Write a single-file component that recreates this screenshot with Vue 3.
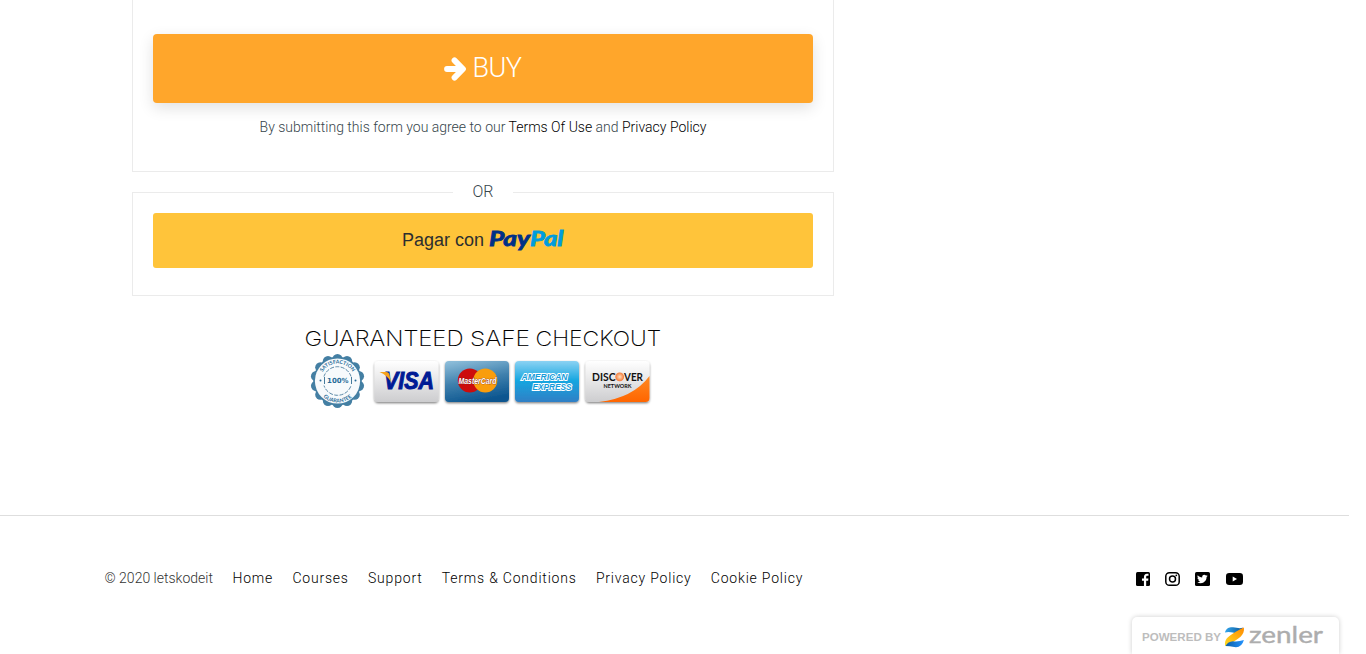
<script setup>
const links = ['Home', 'Courses', 'Support', 'Terms & Conditions', 'Privacy Policy', 'Cookie Policy']
const scallops = Array.from({ length: 14 }, (_, i) => {
  const a = ((i + 0.5) * Math.PI) / 7
  return { x: 37.5 + 21.9 * Math.cos(a), y: 61 + 21.9 * Math.sin(a) }
})
</script>

<template>
  <div class="page">
    <main class="checkout">
      <section class="card form-card">
        <button class="buy">
          <svg width="23" height="24" viewBox="0 0 23 24" fill="none" stroke="#fff" stroke-width="5.8" stroke-linecap="round" stroke-linejoin="round">
            <path d="M3 12H17" /><path d="M10.5 3.4L19 12L10.5 20.6" />
          </svg>
          <span>BUY</span>
        </button>
        <p class="agree">By submitting this form you agree to our <a>Terms Of Use</a> and <a>Privacy Policy</a></p>
      </section>

      <section class="card pay-card">
        <div class="or">OR</div>
        <button class="paypal">
          <span>Pagar con</span>
          <svg width="77" height="34" viewBox="0 -5 77 34" class="paypal-logo">
            <text x="1" y="17" textLength="41" lengthAdjust="spacingAndGlyphs" fill="#003087" stroke="#003087">Pay</text>
            <text x="42" y="17" textLength="33.5" lengthAdjust="spacingAndGlyphs" fill="#009cde" stroke="#009cde">Pal</text>
          </svg>
        </button>
      </section>

      <svg class="safe" width="366" height="100" viewBox="0 0 366 100">
        <defs>
          <linearGradient id="silver" x2="0" y2="1"><stop stop-color="#fff" /><stop offset="1" stop-color="#cdcdcf" /></linearGradient>
          <linearGradient id="navy" x1=".2" x2=".5" y2="1"><stop stop-color="#8abbd8" /><stop offset=".5" stop-color="#3f80ad" /><stop offset="1" stop-color="#0b558f" /></linearGradient>
          <linearGradient id="sky" x2="0" y2="1"><stop stop-color="#8bd2f3" /><stop offset=".48" stop-color="#16a6e0" /><stop offset="1" stop-color="#307fc5" /></linearGradient>
          <linearGradient id="flame" x2="0" y2="1"><stop stop-color="#ff8a22" /><stop offset="1" stop-color="#ff6500" /></linearGradient>
          <radialGradient id="orb"><stop stop-color="#ffdfc0" /><stop offset="1" stop-color="#f47835" /></radialGradient>
          <filter id="drop" x="-10%" y="-10%" width="120%" height="130%"><feDropShadow dx="0" dy="1.2" stdDeviation="1" flood-opacity=".5" /></filter>
          <path id="arcTop" d="M20 61A17.5 17.5 0 0 1 55 61" />
          <path id="arcBottom" d="M16 61A21.5 21.5 0 0 0 59 61" />
        </defs>
        <g class="headline">
          <text x="4.5" y="26" textLength="159" lengthAdjust="spacingAndGlyphs">GUARANTEED</text>
          <text x="170" y="26" textLength="60" lengthAdjust="spacingAndGlyphs">SAFE</text>
          <text x="235.5" y="26" textLength="125.5" lengthAdjust="spacingAndGlyphs">CHECKOUT</text>
        </g>

        <g>
          <circle v-for="(s, i) in scallops" :key="i" :cx="s.x" :cy="s.y" r="5.2" fill="#447fa3" />
          <circle cx="37.5" cy="61" r="24.3" fill="#447fa3" />
          <circle cx="37.5" cy="61" r="22.6" fill="#f7fafc" />
          <circle cx="37.5" cy="61" r="14.3" fill="none" stroke="#477b9c" stroke-width=".9" stroke-dasharray="4 1.4" />
          <rect x="21" y="56.5" width="33" height="9" fill="#f7fafc" />
          <text class="seal"><textPath href="#arcTop" startOffset="50%" text-anchor="middle">SATISFACTION</textPath></text>
          <text class="seal"><textPath href="#arcBottom" startOffset="50%" text-anchor="middle">GUARANTEE</textPath></text>
          <text class="hundred" x="37.8" y="63.2" text-anchor="middle" textLength="21.5" lengthAdjust="spacingAndGlyphs">100%</text>
          <path d="M24.5 57v7M51.5 57v7" stroke="#477b9c" />
          <circle cx="20.5" cy="60.5" r="1" fill="#286b98" /><circle cx="55.5" cy="60.5" r="1" fill="#286b98" />
        </g>

        <g filter="url(#drop)">
          <rect x="74.5" y="41" width="64" height="41" rx="4" fill="url(#silver)" />
          <rect x="145" y="41" width="64" height="41" rx="4" fill="url(#navy)" />
          <rect x="215" y="41" width="64" height="41" rx="4" fill="url(#sky)" />
          <rect x="285.5" y="41" width="64" height="41" rx="4" fill="url(#silver)" />
        </g>

        <text class="visa" x="84" y="68.5" textLength="50" lengthAdjust="spacingAndGlyphs">VISA</text>
        <path d="M79.5 52H86Q89 52 89.5 55L91 62Q87 55 79.5 52Z" fill="#f7a21b" />

        <circle cx="169.8" cy="60.6" r="12" fill="#cc0c0c" /><circle cx="185.3" cy="60.6" r="12" fill="#f99d0c" />
        <text class="mc" x="158.5" y="64" textLength="38" lengthAdjust="spacingAndGlyphs">MasterCard</text>

        <g class="amex">
          <text x="221.5" y="60" textLength="46" lengthAdjust="spacingAndGlyphs">AMERICAN</text>
          <text x="232.5" y="69.5" textLength="39" lengthAdjust="spacingAndGlyphs">EXPRESS</text>
        </g>

        <path d="M349.5 56V78Q349.5 82 345.5 82H299Q333 78 349.5 56Z" fill="url(#flame)" />
        <g class="disc">
          <text x="292" y="60.7" textLength="23.5" lengthAdjust="spacingAndGlyphs">DISC</text>
          <circle cx="319.7" cy="56.8" r="4.4" fill="url(#orb)" />
          <text x="324" y="60.7" textLength="19" lengthAdjust="spacingAndGlyphs">VER</text>
          <text class="network" x="303.5" y="68" textLength="28" lengthAdjust="spacingAndGlyphs">NETWORK</text>
        </g>
      </svg>
    </main>

    <footer>
      <nav><span class="copy">© 2020 letskodeit</span><a v-for="l in links" :key="l">{{ l }}</a></nav>
      <div class="social">
        <svg width="14" height="14" viewBox="0 0 15 14" preserveAspectRatio="none"><rect width="15" height="14" rx="1.6" /><path d="M8.5 14V8.8H6.4V6.6h2.1V5.2c0-2.2 1.2-3.4 3.2-3.4h1.7v2h-1.2c-1 0-1.3.5-1.3 1.4v1.4h2.4L13 8.8h-2.1V14z" fill="#fff" /></svg>
        <svg width="15" height="14" viewBox="0 0 15 14" fill="none" stroke="#000" stroke-width="1.5"><rect x=".8" y=".75" width="13.4" height="12.5" rx="3.6" /><circle cx="7.5" cy="7" r="3" /><circle cx="11.3" cy="3.3" r=".9" fill="#000" stroke="none" /></svg>
        <svg width="15" height="14" viewBox="0 0 15 14"><rect width="15" height="14" rx="1.6" /><path d="M12.8 3.8l-1.2 1.3c0 3.4-2.5 6.1-5.8 6.1-1.4 0-2.6-.4-3.6-1 1.2.1 2.3-.2 3.1-.9-1 0-1.7-.6-2-1.4h.9c-1-.2-1.7-1-1.7-2.1l.9.3c-1-.7-1.2-1.9-.6-2.8 1.1 1.3 2.6 2.1 4.4 2.2-.3-1.4.7-2.7 2.1-2.7.6 0 1.2.3 1.6.7l1.4-.5-.9 1.1z" fill="#fff" /></svg>
        <svg class="tube" width="17" height="12" viewBox="0 0 17 12"><rect width="17" height="12" rx="3.2" /><path d="M6.7 3.5V8.5L11 6Z" fill="#fff" /></svg>
      </div>
    </footer>

    <div class="powered">
      <svg width="206" height="37" viewBox="0 0 206 37">
        <defs>
          <linearGradient id="zb" x2="1"><stop stop-color="#32a6ee" /><stop offset="1" stop-color="#0b5798" /></linearGradient>
          <linearGradient id="zy" x1="1" x2="0" y2="1"><stop stop-color="#ff8a00" /><stop offset="1" stop-color="#ffdc21" /></linearGradient>
          <linearGradient id="zc" x2="1"><stop stop-color="#0a5da4" /><stop offset="1" stop-color="#2493ff" /></linearGradient>
        </defs>
        <text class="by" x="10" y="24" textLength="79" lengthAdjust="spacingAndGlyphs">POWERED BY</text>
        <path d="M93 15.4C94 11 98 10 101 10.3C105 10.8 108 12 111 10.5L106 17Q98 14 93 15.4Z" fill="url(#zb)" />
        <path d="M111.9 10.5C113 18.5 106 22 100 25.5C97 26.5 94 28 93.2 29.2C92 22 96 20 101 16.5C105 14 108 12 111.9 10.5Z" fill="url(#zy)" />
        <path d="M93.5 29Q96 24.5 101 24.2Q106 25 111.9 23Q110 30 104 30.3Q97 29 93.5 29Z" fill="url(#zc)" />
        <text class="zenler" x="117" y="26" textLength="74" lengthAdjust="spacingAndGlyphs">zenler</text>
      </svg>
    </div>
  </div>
</template>

<style>
body { overflow: hidden; background: #fff; }
</style>
<style scoped>
* { box-sizing: border-box; }
.page { position: relative; width: 1366px; height: 654px; overflow: hidden; font-family: Roboto, sans-serif; font-weight: 300; color: #36454b; }
.checkout { width: 702px; height: 515px; margin-left: 132px; display: flex; flex-direction: column; }
.card { border: 1px solid #ebebeb; padding: 0 20px; flex: none; }
.form-card { height: 172px; border-top: 0; padding-top: 34px; }
button { display: flex; width: 660px; align-items: center; justify-content: center; border: 0; border-radius: 4px; padding: 0; }
.buy { height: 69px; gap: 6px; background: #ffa62b; color: #fff; font: 300 27px Roboto, sans-serif; box-shadow: 0 5px 15px rgba(0, 0, 0, .12); }
.buy span { letter-spacing: -.5px; margin: -1px 1px 0 0; }
.agree { margin: 14px 0 0; text-align: center; font-size: 14px; line-height: 20px; }
a { color: #000; }
.pay-card { height: 104px; margin-top: 20px; }
.or { width: 60px; height: 20px; margin: -11px auto 11px; background: #fff; text-align: center; font-size: 16px; line-height: 20px; }
.paypal { height: 55px; gap: 4px; padding-left: 1px; border-radius: 3px; background: #ffc43a; color: #2c2e2f; font: 18px "Liberation Sans", sans-serif; }
.paypal-logo { font: italic 700 20.5px Lato, sans-serif; stroke-width: .8; }
.safe { flex: none; margin: 24px 0 0 168px; }
.headline { font: 200 20.8px Inter, sans-serif; fill: #000; stroke: #000; stroke-width: .1; }
.seal { font: 700 5.2px Lato, sans-serif; fill: #286b98; }
.hundred { font: 700 7px "DejaVu Sans", sans-serif; fill: #286b98; }
.visa { font: italic 700 23px "Liberation Sans", sans-serif; fill: #001b95; stroke: #001b95; stroke-width: 1; }
.mc { font: italic 700 8.5px "Liberation Sans", sans-serif; fill: #fff; stroke: #782020; stroke-width: .6; paint-order: stroke; }
.amex { font: italic 700 9px "Liberation Sans", sans-serif; fill: #169cda; stroke: #fff; stroke-width: 1.9; paint-order: stroke; }
.disc { font: 700 10.8px Lato, sans-serif; fill: #111; }
.network { font: 700 6px Lato, sans-serif; }
footer { display: flex; justify-content: space-between; width: 1349px; height: 139px; padding: 51px 106px 0 104.5px; border-top: 1px solid #dedede; font-size: 14px; line-height: 22px; }
nav { display: flex; gap: 19.25px; }
nav a { letter-spacing: .8px; }
.copy { color: #333; margin-right: .3px; }
.social { display: flex; align-items: center; gap: 15px; height: 24px; }
.tube { margin-left: 1px; }
.powered { position: absolute; left: 1132px; top: 617px; width: 207px; height: 37px; border-radius: 5px 5px 0 0; background: #fff; box-shadow: 0 0 5px rgba(0, 0, 0, .2); }
.by { font: 700 11.5px "Liberation Sans", sans-serif; fill: #bdbdbd; }
.zenler { font: 400 24px Lato, sans-serif; fill: #adadad; stroke: #adadad; stroke-width: .4; }
</style>
